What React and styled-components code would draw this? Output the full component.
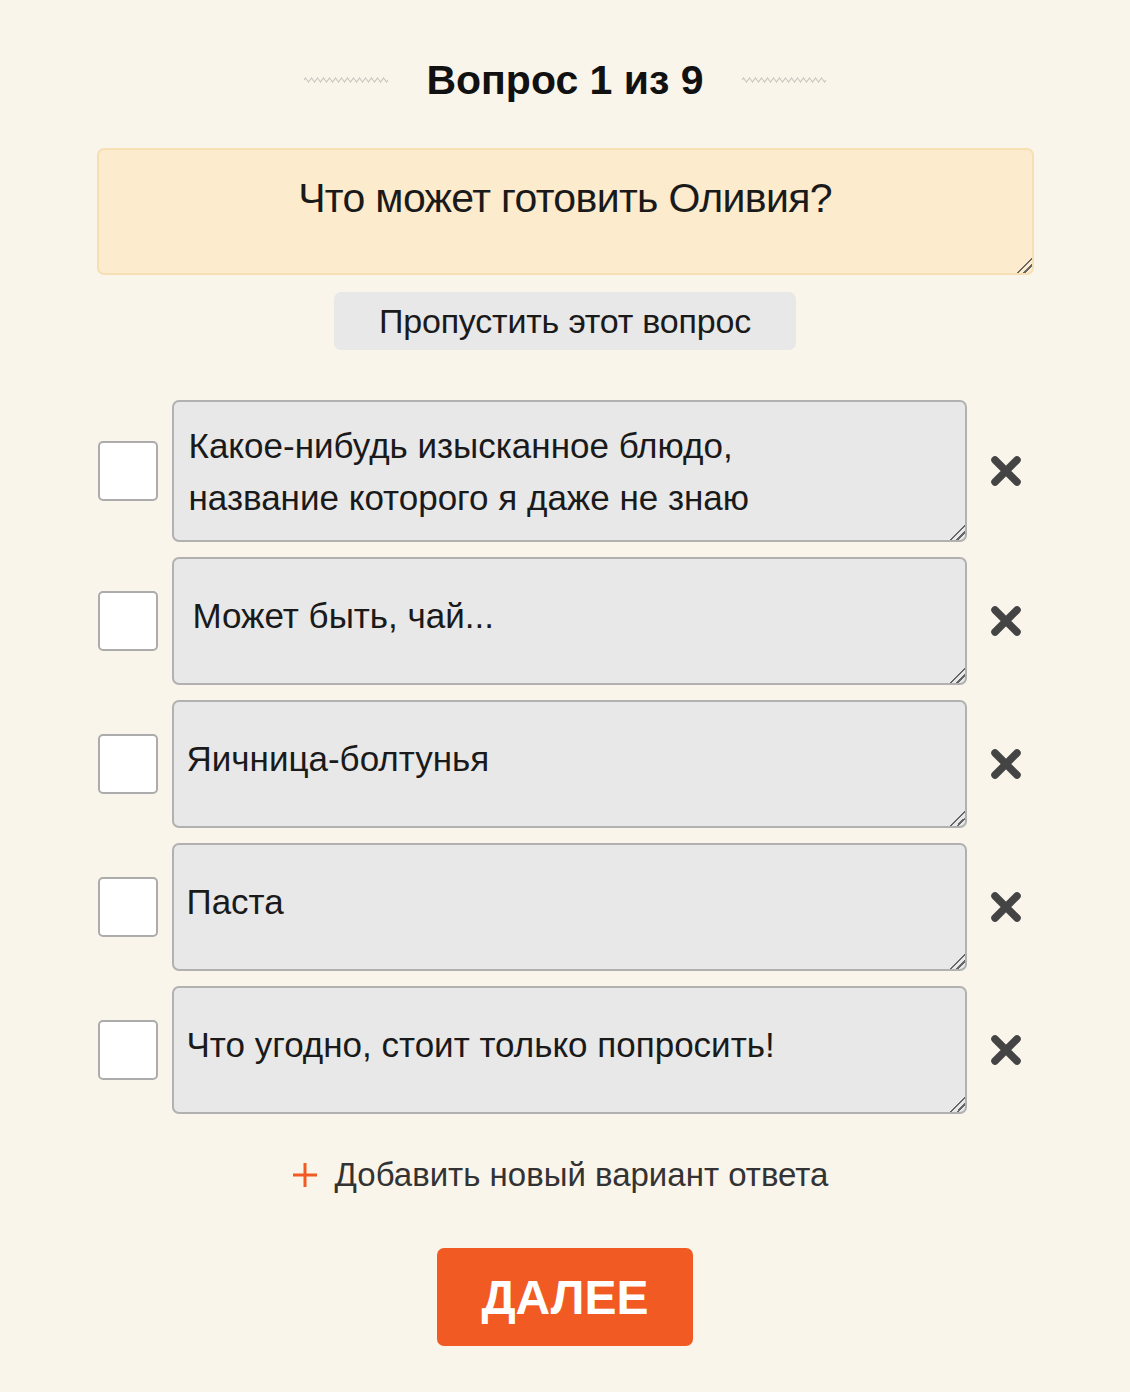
import React from 'react';
import styled, { createGlobalStyle } from 'styled-components';

const GlobalStyle = createGlobalStyle`
  html, body {
    margin: 0;
    padding: 0;
    background: #faf5eb;
  }
  body {
    font-family: "Liberation Sans", Arial, sans-serif;
    color: #1a1a1a;
  }
`;

const resizer = `
  &::-webkit-resizer {
    background: linear-gradient(
      135deg,
      transparent 48%, #666 48%, #666 56%, transparent 56%,
      transparent 70%, #666 70%, #666 78%, transparent 78%
    );
  }
`;

const Page = styled.div`
  width: 937px;
  margin: 0 auto;
  padding: 58px 0 46px;
  display: flex;
  flex-direction: column;
  align-items: stretch;
`;

const Header = styled.div`
  display: flex;
  align-items: center;
  justify-content: center;
  gap: 38px;
  height: 44px;
`;

const Title = styled.h1`
  margin: 0;
  font-size: 41px;
  font-weight: 700;
  line-height: 44px;
  color: #111;
`;

const QuestionBox = styled.textarea`
  margin-top: 46px;
  box-sizing: border-box;
  width: 100%;
  height: 127px;
  padding: 24px 20px 0;
  background: #fcebcc;
  border: 2px solid #f7dfb4;
  border-radius: 7px;
  font-family: "Liberation Sans", Arial, sans-serif;
  font-size: 41px;
  letter-spacing: -0.65px;
  line-height: 48px;
  text-align: center;
  color: #1a1a1a;
  outline: none;
  ${resizer}
`;

const SkipButton = styled.button`
  align-self: center;
  margin-top: 17px;
  width: 462px;
  height: 58px;
  border: none;
  border-radius: 7px;
  background: #e8e8e8;
  font-family: "Liberation Sans", Arial, sans-serif;
  font-size: 34px;
  letter-spacing: -0.2px;
  color: #1a1a1a;
  cursor: pointer;
`;

const Answers = styled.div`
  margin-top: 50px;
  display: flex;
  flex-direction: column;
  gap: 15px;
`;

const Row = styled.div`
  display: flex;
  align-items: center;
  padding-left: 1px;
`;

const Check = styled.input.attrs({ type: 'checkbox' })`
  appearance: none;
  margin: 0;
  flex: none;
  width: 60px;
  height: 60px;
  box-sizing: border-box;
  background: #fff;
  border: 2px solid #acacac;
  border-radius: 5px;
  cursor: pointer;
`;

const AnswerField = styled.textarea`
  margin-left: 14px;
  box-sizing: border-box;
  width: 795px;
  height: ${p => (p.$tall ? 142 : 128)}px;
  padding: ${p => (p.$tall ? '18px' : '31px')} 14px 0 ${p => 13 + (p.$indent || 0)}px;
  background: #e8e8e8;
  border: 2px solid #b1b1b1;
  border-radius: 7px;
  font-family: "Liberation Sans", Arial, sans-serif;
  font-size: 35px;
  line-height: 52px;
  color: #1a1a1a;
  outline: none;
  ${resizer}
`;

const RemoveButton = styled.button`
  margin-left: 21px;
  width: 36px;
  height: 36px;
  padding: 0;
  border: none;
  background: transparent;
  display: flex;
  align-items: center;
  justify-content: center;
  cursor: pointer;
`;

const AddLink = styled.button`
  align-self: center;
  margin: 42px 10px 0 0;
  display: flex;
  align-items: center;
  gap: 17px;
  border: none;
  background: transparent;
  padding: 0;
  font-family: "Liberation Sans", Arial, sans-serif;
  font-size: 33px;
  color: #333;
  cursor: pointer;
`;

const NextButton = styled.button`
  align-self: center;
  margin-top: 54px;
  width: 256px;
  height: 98px;
  border: none;
  border-radius: 7px;
  background: #f15a22;
  color: #fff;
  font-family: "Liberation Sans", Arial, sans-serif;
  font-size: 48px;
  font-weight: 700;
  cursor: pointer;
`;

const Wave = () => {
  let d = 'M0 3';
  for (let x = 0; x < 84; x += 3) d += ` L${x + 1.5} ${x % 6 === 0 ? 1 : 5} L${x + 3} 3`;
  return (
    <svg width="84" height="6" viewBox="0 0 84 6">
      <path d={d} fill="none" stroke="#c9c6c0" strokeWidth="1.2" />
    </svg>
  );
};

const Cross = () => (
  <svg width="32" height="32" viewBox="0 0 32 32">
    <path d="M5 5 L27 27 M27 5 L5 27" stroke="#444" strokeWidth="7.5" strokeLinecap="round" />
  </svg>
);

const Plus = () => (
  <svg width="26" height="26" viewBox="0 0 26 26">
    <path d="M13 1 V25 M1 13 H25" stroke="#f15a22" strokeWidth="3" />
  </svg>
);

const answers = [
  { text: 'Какое-нибудь изысканное блюдо,\nназвание которого я даже не знаю', tall: true, indent: 2 },
  { text: 'Может быть, чай...', indent: 6 },
  { text: 'Яичница-болтунья' },
  { text: 'Паста' },
  { text: 'Что угодно, стоит только попросить!' },
];

export default function App() {
  return (
    <>
      <GlobalStyle />
      <Page>
        <Header>
          <Wave />
          <Title>Вопрос 1 из 9</Title>
          <Wave />
        </Header>

        <QuestionBox defaultValue="Что может готовить Оливия?" />

        <SkipButton>Пропустить этот вопрос</SkipButton>

        <Answers>
          {answers.map((a, i) => (
            <Row key={i}>
              <Check />
              <AnswerField defaultValue={a.text} $tall={a.tall} $indent={a.indent} />
              <RemoveButton aria-label="Удалить">
                <Cross />
              </RemoveButton>
            </Row>
          ))}
        </Answers>

        <AddLink>
          <Plus />
          Добавить новый вариант ответа
        </AddLink>

        <NextButton>ДАЛЕЕ</NextButton>
      </Page>
    </>
  );
}
